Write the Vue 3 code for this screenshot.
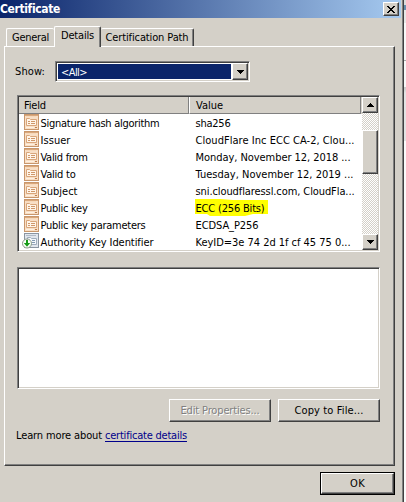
<script setup>
const rows = [
  { field: 'Signature hash algorithm', fw: 119, value: 'sha256', vw: 35 },
  { field: 'Issuer', fw: 30, value: 'CloudFlare Inc ECC CA-2, Clou...', vw: 159 },
  { field: 'Valid from', fw: 47, value: 'Monday, November 12, 2018 ...', vw: 155 },
  { field: 'Valid to', fw: 35, value: 'Tuesday, November 12, 2019 ...', vw: 158 },
  { field: 'Subject', fw: 37, value: 'sni.cloudflaressl.com, CloudFla...', vw: 159 },
  { field: 'Public key', fw: 47, value: 'ECC (256 Bits)', vw: 69, marked: true },
  { field: 'Public key parameters', fw: 105, value: 'ECDSA_P256', vw: 63 },
  { field: 'Authority Key Identifier', fw: 113, value: 'KeyID=3e 74 2d 1f cf 45 75 0...', vw: 155, extension: true },
]

// Tracks a label so that it occupies the given width in pixels.
const vFit = {
  mounted(el, { value }) {
    const natural = el.getBoundingClientRect().width
    el.style.letterSpacing = `${(value - natural) / el.textContent.length}px`
  },
}
</script>

<template>
  <div class="screen">
    <main class="dialog">
      <header class="titlebar">
        <b v-fit="59.5">Certificate</b>
        <button class="raised close" aria-label="Close">
          <svg width="8" height="7" viewBox="0 0 8 7"><path d="M0 0h2v1h1v1h2V1h1V0h2v1H7v1H6v1H5v1h1v1h1v1h1v1H6V6H5V5H3v1H2v1H0V6h1V5h1V4h1V3H2V2H1V1H0z" /></svg>
        </button>
      </header>

      <nav class="tabs">
        <div class="tab general"><span v-fit="37">General</span></div>
        <div class="tab active"><span v-fit="33">Details</span></div>
        <div class="tab path"><span v-fit="83">Certification Path</span></div>
      </nav>

      <section class="panel">
        <div class="show">
          <span class="show-label"><span v-fit="30">Show:</span></span>
          <div class="sunken combo">
            <div class="selected"><span v-fit="26">&lt;All&gt;</span></div>
            <button class="raised arrow" aria-label="Open"><svg width="7" height="4" viewBox="0 0 7 4"><path d="M0 0h7v1H6v1H5v1H4v1H3V3H2V2H1V1H0z" /></svg></button>
          </div>
        </div>

        <div class="sunken list">
          <div class="table">
            <div class="head">
              <div class="cell field"><span v-fit="22">Field</span></div>
              <div class="cell value"><span v-fit="27">Value</span></div>
            </div>
            <div v-for="row in rows" :key="row.field" class="row">
              <svg v-if="!row.extension" class="icon" width="16" height="17" viewBox="0 0 16 17">
                <rect x=".5" y=".5" width="14" height="15" fill="#f8dfc6" stroke="#c9976c" />
                <path d="M1 1.5h13" stroke="#d9a87c" />
                <path d="M2 2.5h10" stroke="#f7d9bb" />
                <path d="M2.5 4.5h3l1 1h6v6h-10z" fill="#fff5e9" stroke="#d9a67b" />
                <path d="M4 7.5h2M7 7.5h4M4 9.5h2M7 9.5h4" stroke="#cf9769" />
                <path d="M2 13.5h8" stroke="#fff0df" />
                <path d="M11 13.5h2" stroke="#bd7f4f" />
              </svg>
              <svg v-else class="icon ext" width="18" height="17" viewBox="0 0 18 17">
                <rect x="2.5" y=".5" width="14" height="14" fill="#e1e6ed" stroke="#8b95a1" />
                <path d="M4 2.5h10" stroke="#b1bbc7" />
                <path d="M5.5 4.5h3l1 1h5v6h-9z" fill="#f5f8fb" stroke="#9fadbd" />
                <path d="M10 7.5h3M10 9.5h3" stroke="#8299b2" />
                <circle cx="5" cy="10.5" r="4.5" fill="#f7fff5" stroke="#8b9788" />
                <path d="M4 7h2v3h2.2L5 13.8 1.8 10H4z" fill="#169b16" />
              </svg>
              <span class="name"><span v-fit="row.fw">{{ row.field }}</span></span>
              <span class="data" :class="{ marked: row.marked }"><span v-fit="row.vw">{{ row.value }}</span></span>
            </div>
          </div>
          <div class="scrollbar">
            <button class="raised arrow" aria-label="Up"><svg width="7" height="4" viewBox="0 0 7 4"><path d="M3 0h1v1h1v1h1v1h1v1H0V3h1V2h1V1h1z" /></svg></button>
            <div class="raised thumb"></div>
            <button class="raised arrow down" aria-label="Down"><svg width="7" height="4" viewBox="0 0 7 4"><path d="M0 0h7v1H6v1H5v1H4v1H3V3H2V2H1V1H0z" /></svg></button>
          </div>
        </div>

        <div class="sunken detail"></div>

        <div class="actions">
          <button class="raised push" disabled><span v-fit="79">Edit Properties...</span></button>
          <button class="raised push"><span v-fit="69">Copy to File...</span></button>
        </div>

        <p class="learn"><span v-fit="86">Learn more about</span><a v-fit="82">certificate details</a></p>
      </section>

      <footer class="footer">
        <button class="ok"><span class="raised"><span v-fit="15">OK</span></span></button>
      </footer>
    </main>
    <aside class="behind"></aside>
  </div>
</template>

<style>
body { overflow: hidden; }
</style>

<style scoped>
* { box-sizing: border-box; }
.screen {
  display: flex;
  width: 406px;
  height: 502px;
  font: 11px/14px "DejaVu Sans Condensed", "DejaVu Sans", sans-serif;
  font-stretch: condensed;
  color: #000;
  white-space: nowrap;
}
.dialog {
  width: 404px;
  background: #d4d0c8;
  border-right: 1px solid #404040;
  box-shadow: inset -1px 0 #808080;
}
.behind {
  width: 2px;
  background: linear-gradient(#dcdcdc 0 5px, #668fae 5px 10px, #e7e7e7 10px 23px, #f8f8f8 23px 60px, #aaa 60px 61px, #f8f8f8 61px 87px, #ccc 87px 88px, #e3e3e3 93px 141px, #fafafa 141px);
}
button { padding: 0; margin: 0; font: inherit; color: inherit; border-radius: 0; }
.raised {
  display: flex;
  align-items: center;
  justify-content: center;
  background: #d4d0c8;
  border: 1px solid;
  border-color: #fff #404040 #404040 #fff;
  box-shadow: inset -1px -1px #808080;
}
.sunken {
  display: flex;
  background: #fff;
  border: 1px solid;
  border-color: #808080 #fff #fff #808080;
  box-shadow: inset 1px 1px #404040, inset -1px -1px #d4d0c8;
  padding: 1px;
}
.titlebar {
  display: flex;
  align-items: center;
  justify-content: space-between;
  width: 401px;
  height: 18px;
  padding-right: 2px;
  color: #fff;
  background: linear-gradient(90deg, #0a246a, #a6caf0);
}
.titlebar b { font-size: 12px; }
.close { width: 16px; height: 14px; color: #000; }
.tabs { display: flex; align-items: flex-end; height: 28px; padding-left: 6px; }
.tab {
  display: flex;
  justify-content: center;
  align-items: center;
  height: 18px;
  padding-top: 1px;
  border-top: 1px solid #fff;
  border-left: 1px solid #fff;
  border-radius: 2px 2px 0 0;
}
.general { width: 48px; }
.active {
  width: 47px;
  height: 21px;
  margin-bottom: -1px;
  padding: 0 0 2px;
  background: #d4d0c8;
  border-right: 1px solid #404040;
  box-shadow: inset -1px 0 #808080;
}
.path { width: 93px; border-left: 0; border-right: 1px solid #404040; box-shadow: inset -1px 0 #808080; }
.panel {
  width: 391px;
  height: 420px;
  margin-left: 4px;
  padding: 14px 0 0 12px;
  border: 1px solid;
  border-color: #fff #404040 #404040 #fff;
  box-shadow: inset -1px -1px #808080;
}
.show { display: flex; align-items: center; height: 21px; }
.show-label { width: 38px; margin-left: -2px; }
.combo { width: 195px; height: 21px; margin-left: 2px; }
.selected { display: flex; align-items: center; flex: 1; margin: 1px; padding: 2px 0 0 3px; color: #fff; background: #0a246a; }
.arrow { flex: none; width: 16px; height: 100%; }
.list { width: 363px; height: 157px; margin-top: 13px; }
.table { width: 344px; overflow: hidden; }
.head { display: flex; height: 17px; background: #d4d0c8; }
.cell { display: flex; align-items: center; padding: 2px 0 0 5px; border-right: 1px solid #808080; border-bottom: 1px solid #808080; }
.field { width: 170px; }
.value { width: 172px; padding-left: 6px; border-left: 1px solid #fff; }
.row { display: flex; align-items: center; height: 17px; }
.icon { flex: none; margin-left: 5px; }
.ext { margin-left: 3px; }
.name { width: 155px; height: 17px; padding-left: .5px; line-height: 19px; }
.data { height: 17px; padding-left: .5px; line-height: 19px; }
.marked {
  width: 73px;
  background: #ff0;
  clip-path: polygon(0 0, 25px 0, 38px 1px, 100% 1px, 100% 15px, 58px 15px, 50px 17px, 15px 17px, 12px 15px, 0 15px);
}
.scrollbar {
  display: flex;
  flex-direction: column;
  width: 16px;
  background: repeating-conic-gradient(#fff 0 25%, #d4d0c8 0 50%) 0 0 / 2px 2px;
}
.scrollbar .arrow { height: 16px; }
.thumb { height: 44px; margin-top: 17px; }
.scrollbar .down { margin-top: auto; }
.detail { width: 363px; height: 122px; margin-top: 15px; }
.actions { display: flex; gap: 7px; margin: 10px 0 0 152px; }
.push { width: 102px; height: 23px; }
.push:disabled { color: #808080; text-shadow: 1px 1px #fff; }
.learn { display: flex; gap: 3px; margin: 7px 0 0 -1px; }
.learn a { color: #00008b; text-decoration: underline; text-underline-offset: 2px; }
.footer { display: flex; justify-content: flex-end; padding: 6px 8px 0 0; }
.ok { width: 75px; height: 23px; border: 1px solid #000; background: #000; }
.ok .raised { height: 100%; }
</style>
